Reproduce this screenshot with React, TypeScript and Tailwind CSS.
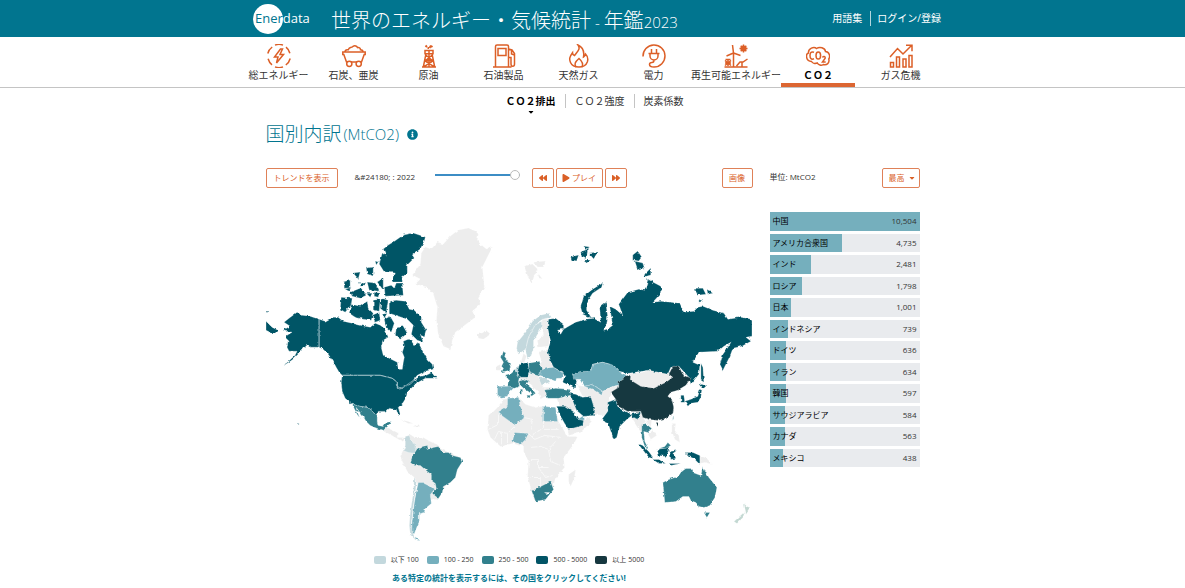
import type { ReactNode } from "react";
import { FaBackward, FaCaretDown, FaForward, FaInfoCircle, FaPlay } from "react-icons/fa";

const GREY = "#ededed";
const PALE = "#c3d8dd";
const LIGHT = "#75afbd";
const MID = "#31808d";
const DARK = "#015466";
const DEEP = "#16373f";

type NavItem = { label: string; icon: ReactNode; active?: boolean };

const navItems: NavItem[] = [
  {
    label: "総エネルギー",
    icon: (
      <>
        <path d="M8 1.1a11.3 11.3 0 0 1 8 0M19 3.2a11.3 11.3 0 0 1 3.9 6M23.2 14.5a11.3 11.3 0 0 1-4.4 6.5M16 22.9a11.3 11.3 0 0 1-8 0M5 20.8a11.3 11.3 0 0 1-3.9-6M.8 9.5A11.3 11.3 0 0 1 5.2 3" />
        <path d="M13.5 5 7.5 13h3.5L9.5 19l7-8.5H13L15.5 5Z" />
      </>
    ),
  },
  {
    label: "石炭、亜炭",
    icon: (
      <>
        <path d="M.8 8h22.4v2.5h-1L19.5 18h-15L1.8 10.5h-1Z" />
        <path d="M3 8c0-2 2-2.5 3.2-2.2C7.5 2.5 10 4 11 2.3c2-1.3 4 0 4.5 1.2 2-.5 3 1.2 3 2.2 1.5 0 2.5 1 2.5 2.3" />
        <circle cx="7.3" cy="19.8" r="2.6" fill="white" />
        <circle cx="16.7" cy="19.8" r="2.6" fill="white" />
      </>
    ),
  },
  {
    label: "原油",
    icon: (
      <>
        <path d="M8 6.5h8v3.2H8ZM9 9.7 6.3 23h11.4L15 9.7M5 23h14M8.7 11l6.8 5.5M15.3 11l-6.8 5.5M7.5 16.7h9M7.5 16.7l9.5 6M16.5 16.7l-9.5 6M12 6v17" />
        <path d="M8.500 1.500 10 3M10.500 4H12M12.500 4l1.500-2.500M14 3l1.500-1" strokeWidth="2" />
      </>
    ),
  },
  {
    label: "石油製品",
    icon: (
      <>
        <path d="M3.5 23V2.5C3.5 1.5 4 1 5 1h10c1 0 1.5.5 1.5 1.5V23M1 23h18.5M6 4.5h8v7H6ZM16.5 5l3.5 1 2.5 3.5V20c0 3-3.5 3-3.5 0v-6.5h-2.500M19.5 6v4l3 1" />
      </>
    ),
  },
  {
    label: "天然ガス",
    icon: (
      <>
        <path d="M11 1c3 4-1 7-3.500 10.500-1.500-.5-2-1.500-2-2.700C2.500 13 2 15 3.500 18.500 5 22 8 23 12 23s7-1.500 8.300-5c1-3 .2-6-1.800-8-.2 1.500-1 2.500-2 3C17.500 7 15.500 3 11 1Z" />
        <path d="M9 23c-2-3-1-5 3-8.500 3.500 3 4.500 5.500 3 8.500" />
      </>
    ),
  },
  {
    label: "電力",
    icon: (
      <>
        <path d="M1 12.500A11 11 0 1 1 12 23c-2.500 0-4.500-1-4.500-2.500S9 18.500 10 18.500s2-.5 2-2.500M6.500 9.500h11M8 9.500V12a4 4 0 0 0 8 0V9.500M9.500 9.500V5M14.500 9.500V5" />
      </>
    ),
  },
  {
    label: "再生可能エネルギー",
    icon: (
      <>
        <path d="M9.500 9 8.500 1M9.500 9l-7 3M9.500 9l7 2.500M9.500 9v14M.5 23h23M12.500 22l3.500-4h3l4.500-3M18 18v5" />
        <circle cx="19.500" cy="4.500" r="2.300" fill="currentColor" />
        <path d="M19.500.5v8M15.500 4.500h8M16.700 1.700l5.600 5.600M22.300 1.700l-5.600 5.600M4 15v7M1 16.500l6 5M7 16.500l-6 5M1.500 15.500h5M1 19h6" />
      </>
    ),
  },
  {
    label: "ＣＯ２",
    active: true,
    icon: (
      <>
        <path d="M5.500 17.500C-.5 17 -.5 10 2.500 9 2 4.500 8 2 10.500 4.500c3-2 8.500-1 9 3 4 .5 5 5 3.300 7.500 1 4-2 6.500-5.500 5.500-2 1.500-5 .5-6-1.500-2 .8-4.800.3-5.800-1.500Z" />
        <path d="M8 8.300C5 7 4 9 4 11.500s1 4.500 4 3.300" />
        <ellipse cx="12.300" cy="11.500" rx="2.300" ry="3.500" />
        <path d="M16.500 13.500c.5-1.800 3.200-1.200 2.700.8L16.500 18h3.200" />
      </>
    ),
  },
  {
    label: "ガス危機",
    icon: (
      <path d="M1.500 18.500h3V23h-3ZM7.500 13h3v10h-3ZM14 15h3v8h-3ZM20 11.500h3V23h-3ZM1 13l7.500-8.500L14 10l8.500-8.500M17 1.300h6v6" />
    ),
  },
];

const ranking = [
  { name: "中国", value: "10,504", width: 100 },
  { name: "アメリカ合衆国", value: "4,735", width: 48 },
  { name: "インド", value: "2,481", width: 27.5 },
  { name: "ロシア", value: "1,798", width: 21.5 },
  { name: "日本", value: "1,001", width: 14 },
  { name: "インドネシア", value: "739", width: 12 },
  { name: "ドイツ", value: "636", width: 11.2 },
  { name: "イラン", value: "634", width: 11 },
  { name: "韓国", value: "597", width: 10.7 },
  { name: "サウジアラビア", value: "584", width: 10.5 },
  { name: "カナダ", value: "563", width: 10.3 },
  { name: "メキシコ", value: "438", width: 9 },
];

const legend = [
  { label: "以下 100", color: PALE },
  { label: "100 - 250", color: LIGHT },
  { label: "250 - 500", color: MID },
  { label: "500 - 5000", color: DARK },
  { label: "以上 5000", color: DEEP },
];

// Countries and regions, drawn back to front
const regions: { fill: string; d: string }[] = [
  // Greenland, Iceland, Svalbard
  {
    fill: GREY,
    d: "M412 276 420 265 421 254 425 248 431 250 437 243 443 245 450 237 458 231 468 229 475 232 478 235 477 241 480 245 486 250 492 248 487 258 482 268 483 278 484 288 478 298 480 305 472 312 475 318 463 327 455 333 452 342 450 350 443 347 438 335 436 322 437 308 433 295 427 288 415 285 420 280Z M477 335 487 332 490 335 483 340 478 339Z M524 267 532 265 537 270 534 276 531 285 527 277Z M533 263 545 262 543 268 537 268Z M538 275 542 280 538 279Z",
  },
  // Central and South America
  {
    fill: GREY,
    d: "M383 431 386 428 393 431 397 433 397 438 403 438 405 440 402 442 395 438 388 434Z M405 437 410 435 413 437 423 438 430 442 437 445 442 450 460 458 438 500 432 500 425 502 414 478 407 472 402 462 400 457 403 450 405 445Z",
  },
  { fill: GREY, d: "M400 420 408 422 413 424 408 424Z M413 426 418 425 420 427 413 427Z" },
  // Europe filler: Ireland, Finland, Baltics, Balkans
  {
    fill: GREY,
    d: "M496 367 500 365 500 371 496 371Z M542 320 548 320 547 328 549 340 548 347 538 348 537 342 543 335 540 326Z M538 353 547 350 553 368 552 374 538 378 543 388 552 388 546 396 540 400 538 393 528 384 520 382 518 378 526 376 538 370 541 362Z M520 364 523 354 526 357 524 363Z",
  },
  // Africa
  {
    fill: GREY,
    d: "M503 400 518 398 525 405 535 408 542 407 555 408 558 422 567 437 577 437 573 445 563 458 564 468 555 478 552 490 543 500 534 502 530 488 527 477 528 462 523 452 523 447 512 444 500 447 490 438 487 430 488 417 497 408Z M568 475 575 470 574 478 570 487 568 482Z",
  },
  // Middle East and central Asia
  {
    fill: GREY,
    d: "M556 399 569 397 577 409 572 412 560 409Z M567 429 582 425 583 421 588 417 591 422 580 433 568 436Z M576 386 583 387 592 385 612 387 624 385 611 394 608 402 611 410 604 416 592 415 588 399 582 397Z",
  },
  // Mongolia
  { fill: GREY, d: "M628 374 642 373 648 371 667 374 671 379 657 389 640 390 631 383Z" },
  // Indochina, Philippines, Papua
  {
    fill: GREY,
    d: "M629 416 636 418 640 414 645 422 641 426 644 436 638 430Z M645 421 651 421 650 427 656 436 650 440 647 434 652 431Z M671 424 675 424 674 431 678 436 679 443 674 440 671 432Z M699 456 706 459 712 465 704 463 699 464Z",
  },
  // Alaska
  {
    fill: DARK,
    d: "M284 323 289 319 293 316 297 313 302 316 310 317 319 320 319 348 310 348 307 346 303 349 300 353 293 360 283 367 295 356 297 352 289 352 287 348 288 342 286 340 287 336 292 333 285 332 283 331 290 327Z M266 322 272 328 278 331 274 335 266 331Z M266 312 269 312 269 313 266 313Z",
  },
  // Canada
  {
    fill: DARK,
    d: "M319 320 325 322 332 318 338 318 343 322 352 324 360 326 370 328 375 324 380 326 384 329 386 333 388 338 383 341 381 348 383 356 393 361 397 363 398 370 402 370 403 363 404 358 402 353 404 347 403 342 408 340 412 343 414 346 418 343 423 353 427 360 432 365 433 370 425 372 417 376 413 381 420 377 426 376 432 373 437 379 430 379 425 379 418 383 414 381 410 385 403 388 397 389 397 383 392 379 380 376 342 376 339 373 336 368 333 362 328 355 323 350 319 348Z",
  },
  // Arctic archipelago
  {
    fill: DARK,
    d: "M379 265 382 254 386 257 383 250 388 246 393 243 403 236 413 234 425 238 424 242 420 250 412 256 414 259 407 266 407 274 402 278 402 283 392 283 395 274 384 273Z M384 288 391 286 394 289 396 284 402 284 403 296 385 297Z M389 302 396 301 405 302 409 310 414 311 421 318 421 323 426 331 424 338 420 335 423 343 417 341 411 335 413 326 407 320 398 317 389 314Z M341 298 352 299 351 306 345 313 340 310Z M351 305 360 307 367 302 368 309 373 314 371 321 363 320 355 318 349 314Z M350 293 360 289 366 296 360 299 352 297Z M344 283 350 281 350 289 344 289Z M353 274 360 273 358 280Z M366 269 373 268 373 277 367 275Z M367 283 375 284 379 292 369 291Z M373 301 380 300 379 312 373 311Z M381 299 388 301 386 314 380 309Z M377 283 383 279 383 291Z M372 316 379 313 380 321 375 323Z M384 320 390 317 394 324 391 333 386 329Z M396 329 403 327 407 334 400 340 395 336Z M375 262 378 263 376 266Z M359 283 366 285 361 288Z M366 294 372 294 370 298Z M374 293 379 294 378 298 374 297Z M345 290 351 288 349 292Z M382 315 387 314 384 319Z",
  },
  // United States
  {
    fill: DARK,
    d: "M342 376 380 376 392 379 397 383 397 389 403 388 410 385 414 381 417 383 412 388 407 393 406 398 403 403 398 408 400 415 398 416 396 410 388 409 385 412 378 412 377 416 372 411 367 408 360 407 352 405 345 399 342 392 341 383Z M298 424 299 424 299 425 298 425Z",
  },
  // Mexico
  {
    fill: MID,
    d: "M352 405 360 407 367 408 372 411 377 416 377 422 378 426 383 427 386 423 391 422 390 425 386 428 383 431 377 429 370 426 366 422 363 417 359 412 356 408 357 412 359 417 361 420 357 415Z",
  },
  { fill: PALE, d: "M405 437 409 436 411 442 416 445 415 454 408 453 403 451 405 445Z" },
  // Brazil
  {
    fill: MID,
    d: "M410 463 412 457 417 449 420 450 422 447 427 446 428 450 433 448 438 447 442 453 448 453 452 456 460 458 462 462 457 470 455 478 450 483 443 487 442 493 438 499 432 494 436 489 435 484 431 481 431 475 427 472 420 466 414 466Z",
  },
  // Argentina
  {
    fill: LIGHT,
    d: "M418 483 423 483 429 486 434 490 430 495 431 504 425 509 424 513 419 514 419 522 416 529 414 534 411 533 412 520 414 503 416 492Z M415 537 420 541 415 540Z",
  },
  { fill: PALE, d: "M414 477 416 483 415 493 413 507 411 523 412 533 415 540 410 535 409 526 410 513 413 493Z" },
  // Norway, Sweden, Low Countries, Romania
  {
    fill: PALE,
    d: "M516 350 517 343 525 333 532 322 540 316 548 314 551 318 542 320 535 325 528 338 525 350 518 355Z M528 338 535 325 541 322 541 328 533 342 533 350 530 358 527 360 525 350Z M513 372 518 366 520 372 517 376Z M538 379 545 378 549 383 541 386Z",
  },
  // United Kingdom, France, Poland, Italy
  {
    fill: MID,
    d: "M502 352 506 354 504 357 507 361 510 367 509 371 501 373 503 369 501 367 503 363 500 358Z M504 376 511 374 514 371 519 377 518 382 519 387 514 389 507 388 508 380Z M528 364 539 362 541 370 539 377 529 374Z M518 382 525 380 528 382 526 385 531 389 535 394 531 397 529 393 523 389 520 386Z M525 396 530 396 529 399Z M520 390 522 390 522 395 520 395Z",
  },
  {
    fill: LIGHT,
    d: "M497 387 508 387 513 389 508 394 507 398 501 399 497 398Z M540 371 546 369 553 368 563 374 561 379 556 379 555 382 550 380 545 378 539 376Z",
  },
  { fill: DARK, d: "M519 365 527 363 529 372 527 378 519 378 517 372Z" },
  // Turkey
  { fill: MID, d: "M544 391 555 389 568 390 570 396 558 399 547 399Z" },
  // Algeria, Egypt, Nigeria
  {
    fill: LIGHT,
    d: "M507 399 518 398 520 408 524 418 515 426 497 413 507 407Z M542 407 555 408 557 422 542 422Z M514 433 528 434 525 440 520 445 512 442Z",
  },
  { fill: MID, d: "M531 491 535 490 540 487 550 482 553 490 545 500 535 502Z" },
  { fill: "white", d: "M545 493 548 493 547 495Z" },
  { fill: LIGHT, d: "M577 420 583 416 584 420 580 422Z" },
  // Saudi Arabia, Iran
  {
    fill: DARK,
    d: "M556 407 565 407 574 413 577 420 583 421 582 426 568 430 564 424 560 417Z M569 394 575 395 582 398 590 397 593 407 593 416 583 417 576 411Z",
  },
  // Russia
  {
    fill: DARK,
    d: "M548 320 555 319 563 325 563 330 557 331 560 335 563 330 568 327 575 323 585 320 593 319 600 323 599 308 605 303 607 317 606 325 603 331 607 330 612 326 609 307 615 310 622 316 618 305 627 293 638 290 644 291 646 285 647 280 652 283 660 287 661 293 652 303 660 302 670 303 679 304 683 313 693 312 697 308 702 307 712 311 723 314 727 320 740 318 751 320 751 337 745 338 750 342 741 347 732 349 729 357 722 371 719 365 722 355 727 348 730 343 723 347 717 352 698 353 692 363 699 366 698 375 690 385 688 378 678 367 670 368 667 375 648 371 628 374 618 372 613 366 602 363 592 365 590 372 572 375 576 381 575 389 562 383 564 377 562 373 553 368 550 362 547 352 550 342 547 328Z",
  },
  // Arctic islands off Russia, Sakhalin
  {
    fill: DARK,
    d: "M580 308 583 297 592 290 602 284 601 288 592 294 586 303 586 311 591 319 582 315Z M632 256 637 252 641 258 638 262 632 261Z M634 262 642 264 644 270 637 271Z M644 275 650 269 650 276 643 278Z M693 289 702 289 705 295 697 296Z M706 290 712 294 707 295Z M570 258 578 256 576 262 571 261Z M580 253 587 250 586 260 581 258Z M588 254 597 253 593 260Z M582 261 590 261 586 264Z M583 247 589 248 585 251Z M700 364 702 368 703 383 700 381Z M698 300 702 302 698 303Z",
  },
  // Kazakhstan, Uzbekistan
  {
    fill: LIGHT,
    d: "M572 375 580 372 590 372 592 365 602 363 613 366 618 372 626 376 622 385 612 387 602 392 592 385 584 387 580 380 573 380Z M583 387 592 385 602 392 601 396 592 390Z",
  },
  // China
  {
    fill: DEEP,
    d: "M610 393 618 388 618 382 627 376 632 382 640 387 653 389 665 383 672 378 668 375 672 367 678 367 682 375 690 379 685 386 677 391 670 393 667 397 671 400 673 408 672 414 665 419 657 421 648 420 642 418 640 412 627 412 617 407 615 400Z M655 423 658 423 657 426Z",
  },
  // India
  {
    fill: DARK,
    d: "M607 403 615 400 617 408 628 414 631 416 626 420 619 427 616 438 613 440 607 423 601 420 607 412Z M630 415 640 412 637 420 633 418Z",
  },
  // Japan, Korea, Indonesia
  {
    fill: DARK,
    d: "M684 402 690 400 697 397 699 390 701 391 700 398 697 403 690 404 687 407Z M698 385 701 384 706 386 702 390Z M680 396 683 396 684 403 680 403Z M637 444 642 446 648 452 653 459 648 458Z M652 460 658 460 665 464 658 464Z M656 450 662 449 668 447 668 451 665 457 658 456Z M669 452 676 451 672 454 675 459 670 460Z M685 453 692 453 699 456 699 465 693 459 688 457Z M668 464 680 464 670 466Z",
  },
  // Thailand, Malaysia, Taiwan
  {
    fill: MID,
    d: "M641 425 645 424 651 429 647 433 643 432 644 442 648 450 644 447 641 438Z M658 449 664 447 667 443 670 446 665 449Z M672 418 673 418 672 421Z",
  },
  // Australia and Tasmania
  {
    fill: MID,
    d: "M662 483 668 480 677 477 681 472 685 469 692 469 692 473 700 476 702 467 705 473 708 478 716 488 714 498 709 506 703 508 698 507 695 503 690 501 688 497 682 497 675 502 664 503 663 493Z M703 513 709 513 706 518Z",
  },
  // New Zealand
  { fill: "#c3d8d2", d: "M743 504 746 507 749 508 745 514Z M744 512 742 518 736 524 733 522Z" },
];

const africaBorders =
  "M498 413V425L488 430M515 426 507 434 498 432 494 440M523 418 532 420 530 430M543 407V428L532 436M543 430H557M528 434 534 440 544 436 560 438M530 448 540 447 548 450 555 442M530 460H538V468H548M548 450 550 462 560 466M538 468 545 478 552 476M530 478H540V488M507 434V446M501 433V445";

const actionClass =
  "flex h-5 items-center justify-center rounded-xs border border-[#df8158] bg-white text-[8px] text-[#da6027]";

function Header() {
  return (
    <header className="bg-[#01758f] text-white">
      <div className="mx-auto flex h-[37px] max-w-[703px] items-center pr-[3px] pl-3">
        <a href="#" className="relative flex h-[30px] w-[78px] shrink-0 items-center">
          <span className="absolute left-0 size-[30px] rounded-full bg-white" />
          <span className="relative pl-[2px] text-[13px]">
            <span className="text-[#01758f]">Ener</span>data
          </span>
        </a>
        <h1 className="mt-1 text-xl font-light whitespace-nowrap">
          世界のエネルギー・気候統計<span className="text-[15px]"> - </span>年鑑
          <span className="text-[15px]">2023</span>
        </h1>
        <div className="ml-auto flex items-center text-[10px] whitespace-nowrap">
          <a href="#" className="border-r border-white/70 pr-2">用語集</a>
          <a href="#" className="pl-[6px]">ログイン/登録</a>
        </div>
      </div>
    </header>
  );
}

function MainNav() {
  return (
    <nav className="border-b border-[#c4c4c4]">
      <div className="mx-auto flex max-w-[703px]">
        {navItems.map((item) => (
          <a
            key={item.label}
            href="#"
            className={
              item.active
                ? "mr-2 flex h-[50px] min-w-[74px] flex-col items-center border-b-4 border-[#dc6632] pt-[7px] font-bold text-black"
                : "flex h-[50px] min-w-[75px] flex-col items-center pt-[7px]"
            }
          >
            <svg viewBox="0 0 24 24" className="size-6 fill-none stroke-current stroke-[1.5] text-[#dc5f27]">
              {item.icon}
            </svg>
            <span className="text-[10px] leading-[14px] whitespace-nowrap">{item.label}</span>
          </a>
        ))}
      </div>
    </nav>
  );
}

function SubNav() {
  return (
    <nav className="flex justify-center pt-[6px] pl-1 text-[10px] leading-[14px]">
      <a href="#" className="relative px-[9px] font-bold text-black">
        ＣＯ２排出
        <FaCaretDown className="absolute top-[14px] left-[30px] size-2" />
      </a>
      <a href="#" className="border-x border-[#c4c4c4] px-[9px]">ＣＯ２強度</a>
      <a href="#" className="px-[9px]">炭素係数</a>
    </nav>
  );
}

function WorldMap() {
  return (
    <svg viewBox="266 225 486 320" className="mt-9 w-full" role="img" aria-label="国別内訳">
      <filter id="coast" x="0" y="0" width="100%" height="100%">
        <feTurbulence type="fractalNoise" baseFrequency="0.25" numOctaves="2" seed="4" />
        <feDisplacementMap in="SourceGraphic" scale="3" xChannelSelector="R" yChannelSelector="G" />
      </filter>
      <g filter="url(#coast)" stroke="white" strokeWidth="0.3" strokeLinejoin="round">
        {regions.map((region) => (
          <path key={region.d} fill={region.fill} d={region.d} />
        ))}
        <path d={africaBorders} fill="none" strokeWidth="0.6" />
      </g>
      <path d="M319 320V348M342 376H380L392 379 397 383V389L403 388 413 381" fill="none" stroke="#a9c9d0" strokeWidth="0.6" />
    </svg>
  );
}

function MapPanel() {
  return (
    <section className="min-w-0">
      <div className="flex items-center">
        <button className={`${actionClass} w-[72px]`}>トレンドを表示</button>
        <label htmlFor="year" className="mb-[3px] ml-[17px] w-20 text-[8px] whitespace-nowrap">
          &amp;#24180; : 2022
        </label>
        <input
          id="year"
          type="range"
          min={1990}
          max={2022}
          defaultValue={2022}
          className="mb-[6px] h-[10px] w-[85px] appearance-none bg-transparent [&::-webkit-slider-runnable-track]:h-[2px] [&::-webkit-slider-runnable-track]:bg-[#3c8dc5] [&::-webkit-slider-thumb]:-mt-1 [&::-webkit-slider-thumb]:size-[10px] [&::-webkit-slider-thumb]:appearance-none [&::-webkit-slider-thumb]:rounded-full [&::-webkit-slider-thumb]:border [&::-webkit-slider-thumb]:border-[#bbbbbb] [&::-webkit-slider-thumb]:bg-white"
        />
        <div className="ml-3 flex gap-[2px]">
          <button className={`${actionClass} w-[22px]`} aria-label="前へ">
            <FaBackward />
          </button>
          <button className={`${actionClass} w-[47px] gap-[2px]`}>
            <FaPlay />
            プレイ
          </button>
          <button className={`${actionClass} w-[22px]`} aria-label="次へ">
            <FaForward />
          </button>
        </div>
        <button className={`${actionClass} ml-auto w-[31px]`}>画像</button>
      </div>
      <WorldMap />
      <ul className="mt-[9px] flex justify-center gap-2 text-[7px] leading-3">
        {legend.map((entry) => (
          <li key={entry.label} className="flex items-center gap-[5px] whitespace-nowrap">
            <span className="h-2 w-3 rounded-xs" style={{ background: entry.color }} />
            {entry.label}
          </li>
        ))}
      </ul>
      <p className="mt-[6px] text-center text-[8px] leading-3 font-bold text-[#01758f]">
        ある特定の統計を表示するには、その国をクリックしてください!
      </p>
    </section>
  );
}

function RankingPanel() {
  return (
    <section>
      <div className="flex items-center justify-between text-[8px]">
        <span className="mb-[3px]">単位: MtCO2</span>
        <div className="relative">
          <select aria-label="並び順" className={`${actionClass} w-[38px] appearance-none pl-[6px]`}>
            <option>最高</option>
            <option>最低</option>
          </select>
          <FaCaretDown className="pointer-events-none absolute top-[6px] right-1 size-2 text-[#da6027]" />
        </div>
      </div>
      <ol className="mt-6 grid h-[255px] grid-rows-12 gap-[3px] text-[8px]">
        {ranking.map((row) => (
          <li key={row.name} className="relative flex items-center justify-between bg-[#e9ebee] px-[3px]">
            <span className="absolute inset-y-0 left-0 bg-[#75afbd]" style={{ width: `${row.width}%` }} />
            <span className="relative text-black">{row.name}</span>
            <span className="relative">{row.value}</span>
          </li>
        ))}
      </ol>
    </section>
  );
}

export default function App() {
  return (
    <div className="min-h-screen bg-white font-['Open_Sans','Noto_Sans_CJK_JP',sans-serif] text-[#333333]">
      <Header />
      <MainNav />
      <SubNav />
      <main className="mx-auto max-w-[654px]">
        <h2 className="mt-3 flex h-7 items-center text-[19px] font-light text-[#01758f]">
          国別内訳
          <span className="ml-[2px] text-[15px]">(MtCO2)</span>
          <FaInfoCircle className="ml-2 size-[11px]" />
        </h2>
        <div className="mt-5 grid grid-cols-[1fr_150px] gap-[17px]">
          <MapPanel />
          <RankingPanel />
        </div>
      </main>
    </div>
  );
}
